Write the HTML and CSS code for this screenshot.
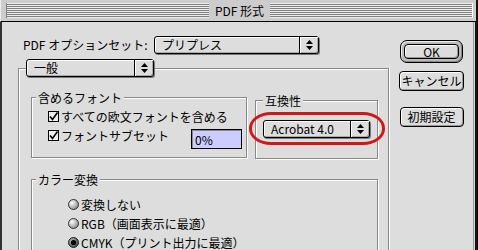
FILE: index.html
```html
<!DOCTYPE html>
<html lang="ja">
<head>
    <meta charset="UTF-8">
    <title>PDF 形式</title>
    <link rel="stylesheet" href="styles.css">
</head>
<body>
    <div class="window">
        <div class="titlebar">
            <div class="stripes"><span class="title">PDF 形式</span></div>
        </div>

        <div class="dialog">
            <div class="main">
                <!-- オプションセット -->
                <div class="preset-row">
                    <label class="preset-label">PDF オプションセット:</label>
                    <div class="popup popup-preset">
                        <span class="popup-text">プリプレス</span>
                        <span class="popup-arrows">
                            <svg width="7" height="10" viewBox="0 0 7 10"><path d="M0 4 L3.5 0 L7 4 Z M0 6 L7 6 L3.5 10 Z" fill="#000"/></svg>
                        </span>
                    </div>
                </div>

                <div class="panel">
                    <div class="popup popup-tab">
                        <span class="popup-text">一般</span>
                        <span class="popup-arrows">
                            <svg width="7" height="10" viewBox="0 0 7 10"><path d="M0 4 L3.5 0 L7 4 Z M0 6 L7 6 L3.5 10 Z" fill="#000"/></svg>
                        </span>
                    </div>

                    <div class="group-row">
                        <!-- 含めるフォント -->
                        <div class="group group-fonts">
                            <div class="group-title">含めるフォント</div>
                            <div class="check-row">
                                <svg class="check" width="11" height="11" viewBox="0 0 11 11"><rect x="0.5" y="0.5" width="10" height="10" fill="#eee" stroke="#000"/><path d="M2 5.5 L4.5 8.5 L9.5 1.5" fill="none" stroke="#000" stroke-width="1.6"/></svg>
                                <span>すべての欧文フォントを含める</span>
                            </div>
                            <div class="check-row">
                                <svg class="check" width="11" height="11" viewBox="0 0 11 11"><rect x="0.5" y="0.5" width="10" height="10" fill="#eee" stroke="#000"/><path d="M2 5.5 L4.5 8.5 L9.5 1.5" fill="none" stroke="#000" stroke-width="1.6"/></svg>
                                <span>フォントサブセット</span>
                                <input class="percent" type="text" value="0%">
                            </div>
                        </div>

                        <!-- 互換性 -->
                        <div class="group group-compat">
                            <div class="group-title">互換性</div>
                            <div class="popup popup-compat">
                                <span class="popup-text">Acrobat 4.0</span>
                                <span class="popup-arrows">
                                    <svg width="7" height="10" viewBox="0 0 7 10"><path d="M0 4 L3.5 0 L7 4 Z M0 6 L7 6 L3.5 10 Z" fill="#000"/></svg>
                                </span>
                            </div>
                            <div class="highlight-ring"></div>
                        </div>
                    </div>

                    <!-- カラー変換 -->
                    <div class="group group-color">
                        <div class="group-title">カラー変換</div>
                        <div class="radio-row">
                            <svg class="radio" width="11" height="11" viewBox="0 0 11 11"><defs><radialGradient id="rg1" cx="35%" cy="35%" r="70%"><stop offset="0" stop-color="#fff"/><stop offset="1" stop-color="#888"/></radialGradient></defs><circle cx="5.5" cy="5.5" r="5" fill="url(#rg1)" stroke="#333"/></svg>
                            <span>変換しない</span>
                        </div>
                        <div class="radio-row">
                            <svg class="radio" width="11" height="11" viewBox="0 0 11 11"><defs><radialGradient id="rg2" cx="35%" cy="35%" r="70%"><stop offset="0" stop-color="#fff"/><stop offset="1" stop-color="#888"/></radialGradient></defs><circle cx="5.5" cy="5.5" r="5" fill="url(#rg2)" stroke="#333"/></svg>
                            <span>RGB（画面表示に最適）</span>
                        </div>
                        <div class="radio-row">
                            <svg class="radio" width="11" height="11" viewBox="0 0 11 11"><defs><radialGradient id="rg3" cx="35%" cy="35%" r="70%"><stop offset="0" stop-color="#bbb"/><stop offset="1" stop-color="#444"/></radialGradient></defs><circle cx="5.5" cy="5.5" r="5" fill="url(#rg3)" stroke="#222"/><circle cx="5.5" cy="5.5" r="2.6" fill="#000"/></svg>
                            <span>CMYK（プリント出力に最適）</span>
                        </div>
                    </div>
                </div>
            </div>

            <div class="side">
                <div class="default-ring"><button class="btn">OK</button></div>
                <button class="btn btn-cancel">キャンセル</button>
                <button class="btn btn-reset">初期設定</button>
            </div>
        </div>
    </div>
</body>
</html>
```

FILE: styles.css
```css
* {
    box-sizing: border-box;
}
body {
    margin: 0;
    font-family: "Noto Sans CJK JP", sans-serif;
    font-size: 12px;
    line-height: 14px;
    color: #000;
    background-color: #ddd;
}
.window {
    width: 478px;
    height: 250px;
    overflow: hidden;
    background-color: #ddd;
}

/* title bar */
.titlebar {
    height: 22px;
    background-color: #ccc;
    border-left: 1px solid #eee;
    border-right: 2px solid #111;
    border-bottom: 1px solid #000;
    padding: 3px 3px 0 5px;
}
.stripes {
    height: 15px;
    display: flex;
    justify-content: center;
    background: repeating-linear-gradient(#eee 0 1px, #808080 1px 2px);
    box-shadow: inset 1px 0 0 #808080, inset -1px 0 0 #fff;
}
.title {
    background-color: #ccc;
    padding: 0 6px;
    line-height: 15px;
}

/* dialog body */
.dialog {
    display: flex;
    height: 228px;
    border-left: 2px solid #333;
    border-right: 3px solid #111;
}
.main {
    width: 388px;
    padding: 14px 0 0 16px;
}
.preset-row {
    display: flex;
    align-items: center;
    height: 18px;
}
.preset-label {
    width: 136px;
    padding-left: 5px;
    white-space: nowrap;
}

/* popup menus */
.popup {
    display: flex;
    height: 18px;
    border: 1px solid #000;
    border-radius: 3px;
    background-color: #ddd;
    box-shadow: inset 1px 1px 0 #fff, inset -1px -1px 0 #aaa, 1px 1px 0 #777;
}
.popup-text {
    flex: 1;
    padding-left: 7px;
    line-height: 16px;
    white-space: nowrap;
}
.popup-arrows {
    width: 19px;
    display: flex;
    align-items: center;
    justify-content: center;
    border-left: 1px solid #000;
    box-shadow: inset 1px 1px 0 #fff;
}
.popup-preset {
    width: 165px;
}
.popup-tab {
    width: 128px;
    margin: -10px 0 0 7px;
}
.popup-compat {
    width: 107px;
    margin: 12px 0 0 7px;
}

/* tab panel and group boxes */
.panel {
    margin-top: 14px;
    width: 371px;
    height: 200px;
    border: 1px solid #888;
    box-shadow: inset 1px 1px 0 #fff, 1px 0 0 #fff;
}
.group-row {
    display: flex;
    align-items: flex-start;
    gap: 8px;
    padding-left: 12px;
}
.group {
    position: relative;
    border: 1px solid #888;
    box-shadow: inset 1px 1px 0 #fff, 1px 1px 0 #fff;
}
.group-title {
    width: max-content;
    margin: -7px 0 0 4px;
    padding: 0 2px;
    background-color: #ddd;
    line-height: 14px;
}
.group-fonts {
    width: 216px;
    height: 61px;
    margin-top: 20px;
}
.group-compat {
    width: 123px;
    height: 59px;
    margin-top: 23px;
}
.group-compat .group-title {
    margin-left: 7px;
}
.group-color {
    width: 347px;
    height: 100px;
    margin: 20px 0 0 12px;
}

.check-row {
    display: flex;
    align-items: center;
    height: 19px;
    padding-left: 16px;
    white-space: nowrap;
}
.check-row:first-of-type {
    margin-top: 2px;
}
.group-title + .check-row {
    margin-top: 2px;
}
.check,
.radio {
    flex: none;
    margin-right: 2px;
}
.percent {
    align-self: flex-start;
    margin: 3px 4px 0 auto;
    width: 51px;
    height: 20px;
    padding: 0 3px;
    font: inherit;
    color: #000;
    background-color: #ccf;
    border: 1px solid #000;
    box-shadow: inset 1px 1px 0 #889;
    outline: none;
}

.group-title + .radio-row {
    margin-top: 8px;
}
.radio-row {
    display: flex;
    align-items: center;
    height: 19px;
    padding-left: 36px;
    white-space: nowrap;
}

/* red mark around the compatibility popup */
.highlight-ring {
    position: absolute;
    left: -7px;
    top: 11px;
    width: 136px;
    height: 33px;
    border: 3px solid #d01818;
    border-radius: 22px / 16px;
}

/* buttons */
.side {
    flex: 1;
    display: flex;
    flex-direction: column;
    align-items: center;
    padding-top: 18px;
    border-right: 1px solid #999;
    margin-right: 1px;
}
.default-ring {
    width: 63px;
    height: 23px;
    padding: 3px;
    border: 1px solid #000;
    border-radius: 7px;
    background-color: #bbb;
    box-shadow: inset 1px 1px 0 #eee, inset -1px -1px 0 #888;
}
.btn {
    display: block;
    height: 20px;
    padding: 0;
    font: inherit;
    line-height: 16px;
    color: #000;
    background-color: #ddd;
    border: 1px solid #000;
    border-radius: 4px;
    box-shadow: inset 1px 1px 0 #fff, inset -1px -1px 0 #999;
    white-space: nowrap;
}
.default-ring .btn {
    width: 100%;
    height: 15px;
    line-height: 13px;
}
.btn-cancel {
    width: 65px;
    margin-top: 8px;
}
.btn-reset {
    width: 64px;
    margin-top: 16px;
}
```
